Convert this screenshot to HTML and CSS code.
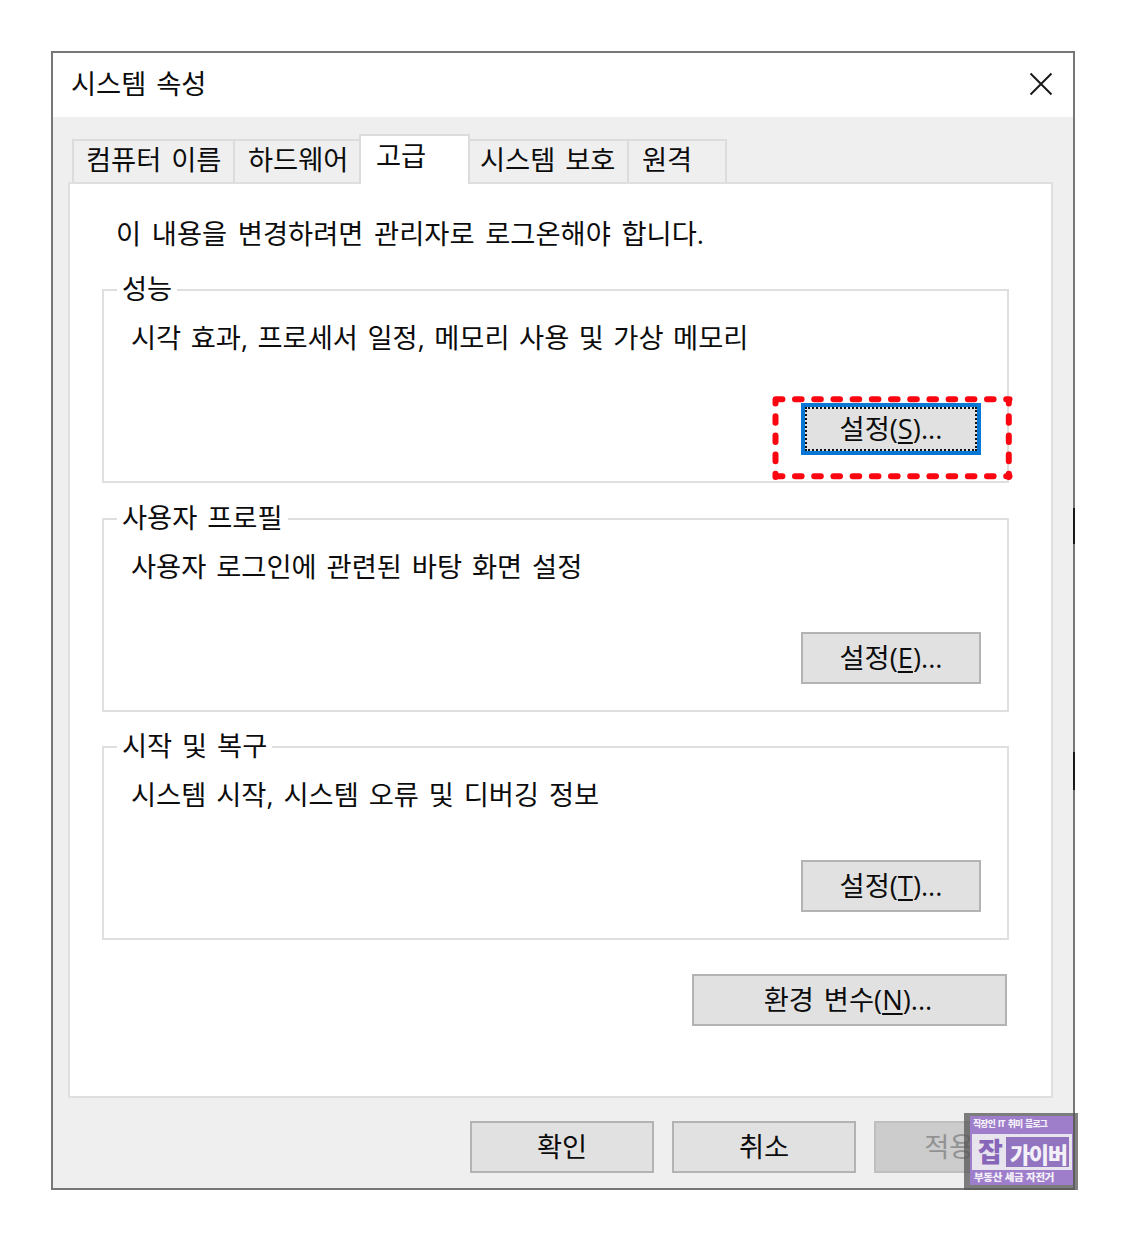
FILE: index.html
```html
<!DOCTYPE html>
<html lang="ko">
<head>
<meta charset="utf-8">
<title>시스템 속성</title>
<link rel="stylesheet" href="styles.css">
</head>
<body>
<main class="dialog">
  <header class="titlebar">
    <h1 class="title">시스템 속성</h1>
    <svg class="close" width="24" height="24" viewBox="0 0 24 24"><path d="M1.5 1.5L22.5 22.5M22.5 1.5L1.5 22.5" stroke="#1a1a1a" stroke-width="2" fill="none"/></svg>
  </header>
  <nav class="tabs">
    <div class="tab tab-name">컴퓨터 이름</div>
    <div class="tab tab-hardware">하드웨어</div>
    <div class="tab tab-active">고급</div>
    <div class="tab tab-protect">시스템 보호</div>
    <div class="tab tab-remote">원격</div>
  </nav>
  <section class="panel">
    <p class="notice">이 내용을 변경하려면 관리자로 로그온해야 합니다.</p>
    <div class="group">
      <h2 class="group-title">성능</h2>
      <p class="group-text group-text-long">시각 효과, 프로세서 일정, 메모리 사용 및 가상 메모리</p>
      <div class="button button-focus"><span class="focus-ring">설정(<u>S</u>)...</span></div>
      <svg class="marker" width="246" height="92" viewBox="770 393 246 92" fill="none" stroke="#fb0510" stroke-width="6" stroke-linecap="round" stroke-dasharray="6.6 12.6">
        <path d="M775.8 399.3H1009.5"/>
        <path d="M775.8 476.3H1009.5"/>
        <path d="M775.5 400V477" stroke-dashoffset="3"/>
        <path d="M1008.8 400V477" stroke-dashoffset="3"/>
      </svg>
    </div>
    <div class="group">
      <h2 class="group-title">사용자 프로필</h2>
      <p class="group-text">사용자 로그인에 관련된 바탕 화면 설정</p>
      <div class="button">설정(<u>E</u>)...</div>
    </div>
    <div class="group">
      <h2 class="group-title">시작 및 복구</h2>
      <p class="group-text">시스템 시작, 시스템 오류 및 디버깅 정보</p>
      <div class="button">설정(<u>T</u>)...</div>
    </div>
    <div class="button button-env">환경 변수(<u>N</u>)...</div>
  </section>
  <footer class="actions">
    <div class="button button-action">확인</div>
    <div class="button button-action">취소</div>
    <div class="button button-action button-disabled">적용(<u>A</u>)</div>
  </footer>
  <i class="edge edge-upper"></i>
  <i class="edge edge-lower"></i>
  <aside class="badge">
    <div class="badge-card">
      <div class="badge-top">직장인 IT 취미 블로그</div>
      <div class="badge-main"><span class="badge-key">잡</span><span class="badge-name">가이버</span></div>
      <div class="badge-bottom">부동산 세금 자전거</div>
    </div>
  </aside>
</main>
</body>
</html>
```
FILE: styles.css
```css
* { box-sizing: border-box; }
body {
  margin: 0;
  padding: 51px;
  background: #fff;
  color: #0c0c0c;
  font-family: "Open Sans", "Noto Sans CJK KR", sans-serif;
  font-size: 27.3px;
  line-height: 40px;
  word-spacing: 2.8px;
  white-space: nowrap;
}
h1, h2, p { margin: 0; font-size: inherit; font-weight: 400; }
u { text-decoration-thickness: 2px; text-underline-offset: 3px; }
.dialog {
  position: relative;
  width: 1024px;
  height: 1139px;
  border: 2px solid #777;
  background: #efefef;
}
.titlebar {
  display: flex;
  justify-content: space-between;
  align-items: center;
  height: 64px;
  padding: 0 20px 3px 18px;
  background: #fff;
}
.tabs {
  display: flex;
  align-items: flex-end;
  height: 65px;
  padding: 17px 0 0 19px;
}
.tab {
  height: 43px;
  border: 2px solid #dcdcdc;
  border-bottom: 0;
  margin-right: -2px;
  padding-left: 12px;
  line-height: 38px;
}
.tab-name { width: 163px; }
.tab-hardware { width: 128px; padding-left: 13px; }
.tab-active {
  position: relative;
  z-index: 1;
  width: 111px;
  height: 50px;
  margin-bottom: -2px;
  padding-left: 15px;
  background: #fff;
  line-height: 40px;
}
.tab-protect { width: 161px; padding-left: 10px; }
.tab-remote { width: 100px; padding-left: 13px; }
.panel {
  width: 985px;
  height: 916px;
  margin-left: 15px;
  padding: 30px 42px 0 32px;
  border: 2px solid #dfdfdf;
  background: #fff;
}
.notice { margin-bottom: 35px; padding-left: 14px; word-spacing: 3.6px; }
.group {
  position: relative;
  width: 907px;
  height: 194px;
  margin-bottom: 34.5px;
  border: 2px solid #dfdfdf;
}
.group-title {
  width: fit-content;
  margin: -22px 0 9px 13px;
  padding: 0 5px;
  background: #fff;
}
.group-text { padding-left: 27px; }
.group-text-long { word-spacing: 2.4px; }
.button {
  display: flex;
  justify-content: center;
  align-items: center;
  width: 180px;
  height: 52px;
  border: 2px solid #b3b3b3;
  background: #e1e1e1;
}
.group .button { margin: 45px 26px 0 auto; }
.button-focus.button { border: 4px solid #0878d4; }
.focus-ring {
  display: flex;
  justify-content: center;
  align-items: center;
  width: 100%;
  height: 100%;
  border: 2px dotted #111;
}
.marker { position: absolute; left: 666px; top: 102px; }
.panel > .button-env {
  width: 315px;
  margin: -1px 2px 0 auto;
  padding-right: 3px;
}
.actions {
  display: flex;
  justify-content: flex-end;
  gap: 18px;
  padding: 23px 15px 0 0;
}
.button-action { width: 184px; padding-bottom: 1px; }
.button-disabled { border-color: #bfbfbf; background: #ccc; color: #929292; }
.edge { position: absolute; right: -2px; width: 2px; background: #17191b; }
.edge-upper { top: 455px; height: 36px; }
.edge-lower { top: 699px; height: 38px; }
.badge {
  position: absolute;
  left: 911px;
  top: 1060px;
  width: 114px;
  height: 77px;
  padding: 3px 5px 5px 6px;
  background: rgba(85, 85, 85, .75);
  color: #f4f0f8;
  font-family: "Noto Sans CJK KR", sans-serif;
  font-weight: 900;
  word-spacing: 0;
}
.badge-card { height: 69px; background: rgba(160, 126, 208, .94); }
.badge-top {
  height: 18px;
  padding-left: 3px;
  font-size: 8.8px;
  line-height: 15px;
  letter-spacing: -.75px;
  word-spacing: 1px;
}
.badge-main {
  display: flex;
  height: 36px;
  margin: 0 1px 0 2px;
  border: 3px solid #e8e4ee;
  background: #9273c0;
}
.badge-key {
  width: 31px;
  background: #e8e4ee;
  color: #8765b8;
  font-size: 27px;
  line-height: 27px;
  text-align: center;
}
.badge-name {
  padding-left: 4px;
  font-size: 22px;
  line-height: 33px;
  letter-spacing: -1.4px;
}
.badge-bottom { padding-left: 4px; font-size: 10.5px; line-height: 13px; letter-spacing: -.3px; }
```
